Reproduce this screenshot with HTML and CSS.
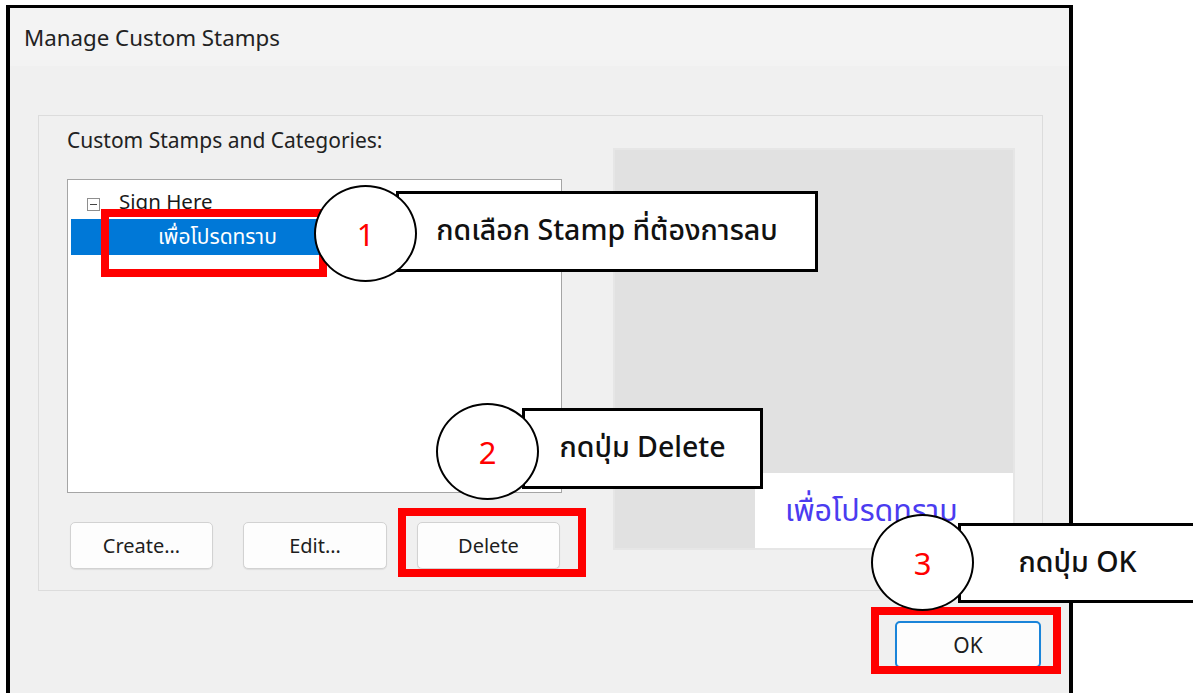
FILE: index.html
```html
<!DOCTYPE html>
<html lang="th">
<head>
<meta charset="utf-8">
<title>Manage Custom Stamps</title>
<link rel="stylesheet" href="styles.css">
</head>
<body>
<div class="dialog">
  <div class="titlebar">Manage Custom Stamps</div>
  <div class="dialog-body">
    <div class="group">
      <div class="left-col">
        <div class="group-label">Custom Stamps and Categories:</div>
        <div class="tree">
          <div class="tree-node"><span class="toggle"></span><span class="node-text">Sign Here</span></div>
          <div class="tree-leaf"><span class="leaf-text">เพื่อโปรดทราบ</span></div>
        </div>
        <div class="btn-row">
          <button class="btn">Create…</button>
          <button class="btn btn-wide">Edit…</button>
          <button class="btn">Delete</button>
        </div>
      </div>
      <div class="preview">
        <div class="stamp"><span class="stamp-text">เพื่อโปรดทราบ</span></div>
      </div>
    </div>
    <div class="footer">
      <button class="btn btn-ok">OK</button>
    </div>
  </div>
</div>

<!-- red highlight frames -->
<div class="mark mark-1"></div>
<div class="mark mark-2"></div>
<div class="mark mark-3"></div>

<!-- numbered step notes -->
<div class="callout callout-1">
  <div class="badge">1</div>
  <div class="note">กดเลือก Stamp ที่ต้องการลบ</div>
</div>
<div class="callout callout-2">
  <div class="badge">2</div>
  <div class="note">กดปุ่ม Delete</div>
</div>
<div class="callout callout-3">
  <div class="badge">3</div>
  <div class="note">กดปุ่ม OK</div>
</div>
</body>
</html>
```

FILE: styles.css
```css
html, body {
  margin: 0;
  padding: 0;
}

body {
  width: 1193px;
  height: 693px;
  overflow: hidden;
  position: relative;
  background: #ffffff;
  font-family: "Noto Sans", "Noto Sans Thai", "DejaVu Sans", sans-serif;
  color: #1b1b1b;
}

/* ---------- dialog window ---------- */
.dialog {
  margin: 5px 0 0 6px;
  width: 1059px;
  height: 700px;
  border: 4px solid #000;
  border-top-width: 3px;
  border-bottom: none;
  background: #f0f0f0;
}

.titlebar {
  height: 58px;
  padding-left: 14px;
  display: flex;
  align-items: center;
  background: #f3f3f3;
  font-size: 22.3px;
  color: #222;
}

.dialog-body {
  padding: 49px 26px 0 28px;
}

.group {
  display: flex;
  gap: 51px;
  border: 1px solid #dcdcdc;
  padding: 12px 27px 21px 28px;
}

.left-col {
  width: 495px;
  display: flex;
  flex-direction: column;
}

.group-label {
  height: 24px;
  line-height: 24px;
  font-size: 21px;
  color: #222;
}

/* ---------- tree list ---------- */
.tree {
  margin-top: 27px;
  height: 306px;
  background: #fff;
  border: 1px solid #a5a5a5;
  padding: 3px;
}

.tree-node {
  height: 36px;
  display: flex;
  align-items: center;
  padding-left: 16px;
}

.toggle {
  width: 11px;
  height: 11px;
  border: 1px solid #8e8e8e;
  background: #fff;
  position: relative;
  margin-right: 19px;
  margin-top: 6px;
}

.toggle::after {
  content: "";
  position: absolute;
  left: 2px;
  right: 2px;
  top: 5px;
  height: 1px;
  background: #444;
}

.node-text {
  font-size: 20.5px;
  color: #1a1a1a;
}

.tree-leaf {
  height: 36px;
  width: 250px;
  background: #0078d7;
  display: flex;
  align-items: center;
  padding-left: 87px;
  box-sizing: border-box;
}

.leaf-text {
  color: #fff;
  font-size: 21px;
}

/* ---------- buttons ---------- */
.btn-row {
  margin-top: 29px;
  padding-left: 3px;
  display: flex;
  gap: 30px;
}

.btn {
  width: 143px;
  height: 47px;
  background: #fdfdfd;
  border: 1px solid #d2d2d2;
  border-radius: 5px;
  box-shadow: 0 1px 1px rgba(0, 0, 0, 0.08);
  font-family: inherit;
  font-size: 20px;
  color: #1e1e1e;
  padding: 0;
}

.btn-wide {
  width: 144px;
}

/* ---------- preview panel ---------- */
.preview {
  margin-top: 20px;
  width: 402px;
  height: 402px;
  box-sizing: border-box;
  background: #e1e1e1;
  border: 2px solid #e6e6e6;
  display: flex;
  align-items: flex-end;
  justify-content: flex-end;
}

.stamp {
  width: 258px;
  height: 75px;
  background: #fff;
  box-sizing: border-box;
  padding-left: 30px;
  padding-top: 2px;
  display: flex;
  align-items: center;
}

.stamp-text {
  font-size: 30.5px;
  color: #4b3cf0;
}

/* ---------- footer ---------- */
.footer {
  display: flex;
  justify-content: flex-end;
  padding-top: 30px;
  padding-right: 2px;
}

.btn-ok {
  width: 146px;
  border: 2px solid #1a84d9;
  font-size: 21px;
}

/* ---------- red highlight frames ---------- */
.mark {
  position: absolute;
  border: 8px solid #ff0000;
  box-sizing: border-box;
}

.mark-1 { left: 101px; top: 209px; width: 226px; height: 68px; }
.mark-2 { left: 398px; top: 508px; width: 188px; height: 69px; }
.mark-3 { left: 871px; top: 607px; width: 190px; height: 67px; }

/* ---------- numbered notes ---------- */
.callout {
  position: absolute;
  display: flex;
  align-items: flex-start;
}

.badge {
  position: relative;
  z-index: 2;
  width: 103px;
  height: 97px;
  box-sizing: border-box;
  border: 2px solid #000;
  border-radius: 50%;
  background: #fff;
  display: flex;
  align-items: center;
  justify-content: center;
  font-size: 31px;
  color: #ff0000;
  flex-shrink: 0;
}

.note {
  height: 81px;
  box-sizing: border-box;
  border: 3px solid #000;
  background: #fff;
  display: flex;
  align-items: center;
  justify-content: center;
  font-size: 28.5px;
  font-weight: 500;
  color: #111;
  flex-shrink: 0;
}

.callout-1 { left: 314px; top: 185px; }
.callout-1 .note { width: 422px; margin-left: -21px; margin-top: 6px; }

.callout-2 { left: 436px; top: 403px; }
.callout-2 .note { width: 241px; margin-left: -17px; margin-top: 5px; }

.callout-3 { left: 871px; top: 514px; }
.callout-3 .note { width: 239px; height: 80px; margin-left: -16px; margin-top: 9px; }
```
